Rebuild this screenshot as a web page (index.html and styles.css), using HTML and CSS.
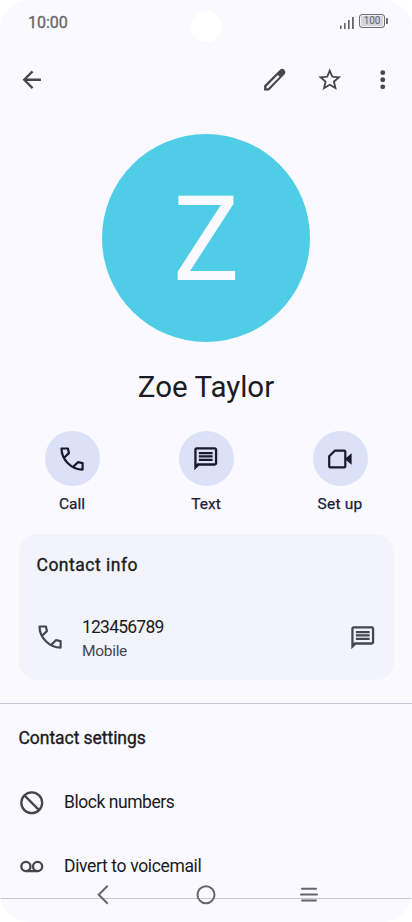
FILE: index.html
```
<!DOCTYPE html>
<html lang="en">
<head>
<meta charset="utf-8">
<title>Zoe Taylor</title>
<link rel="stylesheet" href="styles.css">
</head>
<body>
<svg class="defs" aria-hidden="true">
  <symbol id="call" viewBox="0 0 24 24"><path fill="none" stroke="currentColor" stroke-width="2.2" stroke-linejoin="round" d="M4.6 10.3 8.9 6.1 7.9 1.5H1.5C1.5 12.7 11.5 22.6 22.6 22.6V16.1L17.9 15.2 13.7 19.4"/></symbol>
  <symbol id="message" viewBox="0 0 24 24"><path fill-rule="evenodd" d="M4 2h16c1.1 0 2 .9 2 2v12c0 1.1-.9 2-2 2H6l-4 4V4c0-1.1.9-2 2-2zm0 2v12.6l.8-.6H20V4zM6 6h12v2H6zm0 3h12v2H6zm0 3h12v2H6z"/></symbol>
</svg>
<div class="screen">
  <header class="status">
    <span class="clock">10:00</span>
    <span class="camera"></span>
    <span class="indicators">
      <svg class="signal" viewBox="0 0 14 13"><path d="M0 9.5h1.6V13H0zM4 7h1.6v6H4zM8 4h1.7v9H8zM12 1h1.8v12H12z"/></svg>
      <span class="battery">100</span>
    </span>
  </header>
  <nav class="toolbar">
    <svg class="icon back" viewBox="0 0 24 24"><path d="M20 11H7.83l5.59-5.59L12 4l-8 8 8 8 1.41-1.41L7.83 13H20z"/></svg>
    <svg class="icon edit" viewBox="0 0 24 24"><path fill-rule="evenodd" d="M2.7 17 16.8 3.1Q18.7 1.7 20.4 3.4T20.8 7L7 21.3H2.7zM4.8 17.9v1.5h1.4L16.2 9.4 14.7 7.9z"/></svg>
    <svg class="icon star" viewBox="0 0 24 24"><path d="M22 9.24l-7.19-.62L12 2 9.19 8.63 2 9.24l5.46 4.73L5.82 21 12 17.27 18.18 21l-1.63-7.03L22 9.24zM12 15.4l-3.76 2.27 1-4.28-3.32-2.88 4.38-.38L12 6.1l1.71 4.04 4.38.38-3.32 2.88 1 4.28L12 15.4z"/></svg>
    <svg class="icon more" viewBox="0 0 24 24"><circle cx="12" cy="5.8" r="2.1"/><circle cx="12" cy="12" r="2.1"/><circle cx="12" cy="18.2" r="2.1"/></svg>
  </nav>
  <main>
    <div class="avatar"><span>Z</span></div>
    <h1><span>Zoe Taylor</span></h1>
    <section class="actions">
      <div class="action"><span class="bubble"><svg class="call"><use href="#call"/></svg></span><span class="t-call">Call</span></div>
      <div class="action"><span class="bubble"><svg class="icon"><use href="#message"/></svg></span><span class="t-text">Text</span></div>
      <div class="action"><span class="bubble"><svg class="video" viewBox="0 0 24 20"><path fill="none" stroke="currentColor" stroke-width="2.2" stroke-linejoin="round" d="M6.8 1.7h9.4q1.1 0 1.1 1.1v14.4q0 1.1-1.1 1.1H2.3q-1.1 0-1.1-1.1V7.3z"/><path d="M18 9.1 23.6 4.2v11.6L18 11z"/></svg></span><span class="t-setup">Set up</span></div>
    </section>
    <section class="card">
      <h2 class="t-info">Contact info</h2>
      <div class="phone">
        <svg class="call"><use href="#call"/></svg>
        <div class="number"><span class="t-number">123456789</span><small>Mobile</small></div>
        <svg class="icon"><use href="#message"/></svg>
      </div>
    </section>
    <section class="settings">
      <h2 class="t-settings">Contact settings</h2>
      <div class="row"><svg class="icon" viewBox="0 0 24 24"><g fill="none" stroke="currentColor" stroke-width="2"><circle cx="12" cy="12" r="9.1"/><path d="m5.6 5.6 12.8 12.8"/></g></svg><span class="t-block">Block numbers</span></div>
      <div class="row"><svg class="icon" viewBox="0 0 24 24"><g fill="none" stroke="currentColor" stroke-width="2"><circle cx="6.9" cy="11.8" r="4"/><circle cx="17.1" cy="11.8" r="4"/><path d="M6.9 15.8h10.2"/></g></svg><span class="t-divert">Divert to voicemail</span></div>
    </section>
  </main>
  <footer class="system">
    <svg viewBox="0 0 24 24"><path d="m16.7 2.7-9 9 9 9"/></svg>
    <svg viewBox="0 0 24 24"><circle cx="12" cy="11.7" r="8.5"/></svg>
    <svg viewBox="0 0 24 24"><path stroke-linecap="round" d="M5 5.8h14M4 11.6h16M5 17.4h14"/></svg>
  </footer>
</div>
</body>
</html>
```
FILE: styles.css
```
* { box-sizing: border-box; }
body { margin: 0; background: #fff; font-family: Roboto, sans-serif; color: #1b1b21; }
.defs { position: absolute; width: 0; height: 0; }
svg { display: block; fill: currentColor; flex: none; }
h1, h2 { margin: 0; font-weight: 400; }
.screen { position: relative; width: 412px; height: 922px; overflow: hidden; background: #faf9ff; border-radius: 29px; }
.status { display: grid; grid-template-columns: 1fr 31px 1fr; height: 44px; padding: 0 25px 0 28px; color: #646469; }
.clock { font-size: 16px; line-height: 45px; letter-spacing: 0; -webkit-text-stroke: .3px; }
.camera { width: 31px; height: 31px; margin: 11px 0 0 -1px; border-radius: 50%; background: #fff; }
.indicators { display: flex; justify-content: flex-end; gap: 5px; padding-top: 14px; }
.signal { width: 14px; height: 13px; margin-top: 2px; }
.battery { position: relative; width: 26px; height: 14px; margin-right: 2px; border: 1.5px solid #6d6d72; border-radius: 3px; background: #d4d4da; box-shadow: inset 0 0 0 1px #f3f3f8; font-size: 10px; line-height: 12px; text-align: center; letter-spacing: -.2px; }
.battery::after { content: ""; position: absolute; right: -3.5px; top: 3px; width: 2px; height: 6px; background: #6d6d72; border-radius: 0 1px 1px 0; }
.toolbar { display: flex; align-items: center; height: 71px; padding: 0 16px 0 18px; color: #46464f; }
.icon { width: 27.5px; height: 27.5px; }
.edit { margin-left: auto; }
.star { margin-left: 27.5px; }
.more { margin-left: 25px; }
.avatar { display: flex; justify-content: center; width: 208px; height: 208px; margin: 19.4px auto 0; border-radius: 50%; background: #50cde6; color: #faf9ff; font-size: 118px; line-height: 212px; }
.avatar span { transform: scaleX(.94); }
h1 { height: 53px; margin-top: 19px; text-align: center; font-size: 29.5px; line-height: 53px; }
.actions { display: flex; justify-content: space-between; margin-top: 17px; padding: 0 32px; }
.action { display: flex; flex-direction: column; align-items: center; width: 80px; font-size: 15.5px; line-height: 20px; color: #1b2035; white-space: nowrap; -webkit-text-stroke: .25px; }
.t-setup { letter-spacing: .25px; }
.bubble { display: flex; align-items: center; justify-content: center; width: 55px; height: 55px; margin-bottom: 7.5px; border-radius: 50%; background: #dbe2f7; color: #151b2c; }
.call { width: 24px; height: 24px; }
.video { width: 24px; height: 20px; }
.card { height: 146px; margin: 20.5px 18.5px 0; padding: 19px 18.5px 0 18px; border-radius: 18px; background: #f3f3fb; }
h2 { font-size: 17.5px; line-height: 24px; -webkit-text-stroke: .35px; }
.t-info { letter-spacing: .5px; }
.t-settings { letter-spacing: -.05px; margin-left: .5px; }
.phone { display: flex; align-items: center; margin-top: 36px; color: #46464f; }
.phone .call { margin-left: 1.5px; }
.number { display: flex; flex-direction: column; flex: 1; margin: 2px 0 -2px 20px; }
.t-number { font-size: 17.5px; line-height: 25px; letter-spacing: -.78px; color: #1b1b21; }
small { font-size: 15.5px; line-height: 23px; letter-spacing: -.3px; }
.phone .icon { margin-right: -1px; }
.settings { margin-top: 23px; padding: 22px 18px 0; height: 196px; border: solid #c5c5d6; border-width: 1px 0; }
.row { display: flex; align-items: center; gap: 18.5px; height: 64px; font-size: 17.5px; }
.t-block { letter-spacing: -.45px; }
.t-divert { letter-spacing: -.35px; }
.row:nth-child(2) { margin-top: 20px; }
.row svg { color: #46464f; }
.system { position: absolute; left: 0; right: 0; bottom: 15px; display: flex; justify-content: center; gap: 79px; color: #65656b; }
.system svg { width: 24px; height: 24px; fill: none; stroke: currentColor; stroke-width: 2; }
```
